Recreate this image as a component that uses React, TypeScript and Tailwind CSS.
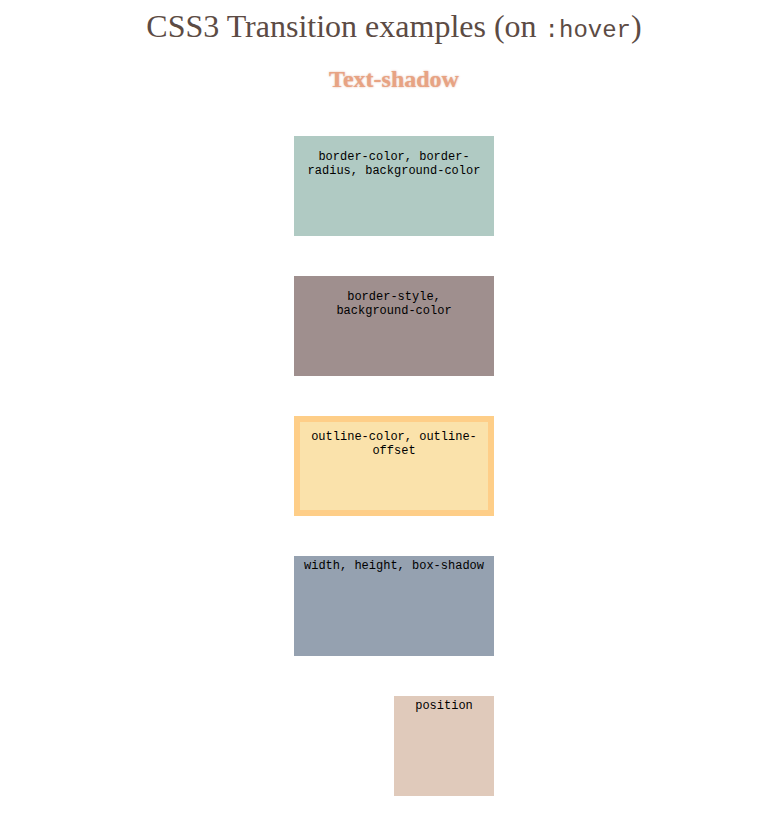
import React from 'react';

const boxes = [
  { label: 'border-color, border-radius, background-color', cls: 'bg-[#b0cac3] px-[10px] pt-[14px]' },
  { label: 'border-style, background-color', cls: 'bg-[#9f8f8e] px-[10px] pt-[14px]' },
  { label: 'outline-color, outline-offset', cls: 'bg-[#fae2ab] border-[6px] border-[#fece88] px-[4px] pt-[8px]' },
  { label: 'width, height, box-shadow', cls: 'bg-[#95a1b0] px-[5px] pt-[3px]' },
];

const App: React.FC = () => {
  return (
    <div className="min-h-[821px] bg-white flex flex-col items-center pl-[7px] font-['Liberation_Serif',serif]">
      <h1 className="mt-[6px] text-[32px] leading-[40px] text-[#5c4b44]">
        CSS3 Transition examples (on <code className="font-['Liberation_Mono',monospace] text-[24px]">:hover</code>)
      </h1>
      <h2 className="mt-[13px] text-[24px] leading-[30px] font-bold text-[#e8a383] [text-shadow:0_0_2px_rgba(200,120,90,0.6)]">
        Text-shadow
      </h2>
      <div className="mt-[42px] flex flex-col gap-10">
        {boxes.map((b, i) => (
          <div
            key={i}
            className={`w-[200px] h-[100px] text-center text-[12px] leading-[14px] text-black font-['Liberation_Mono',monospace] ${b.cls}`}
          >
            {b.label}
          </div>
        ))}
        <div className="w-[200px] h-[100px] flex justify-end">
          <div className="w-[100px] h-[100px] bg-[#e0cabb] pt-[3px] text-center text-[12px] leading-[14px] text-black font-['Liberation_Mono',monospace]">
            position
          </div>
        </div>
      </div>
    </div>
  );
};

export default App;
